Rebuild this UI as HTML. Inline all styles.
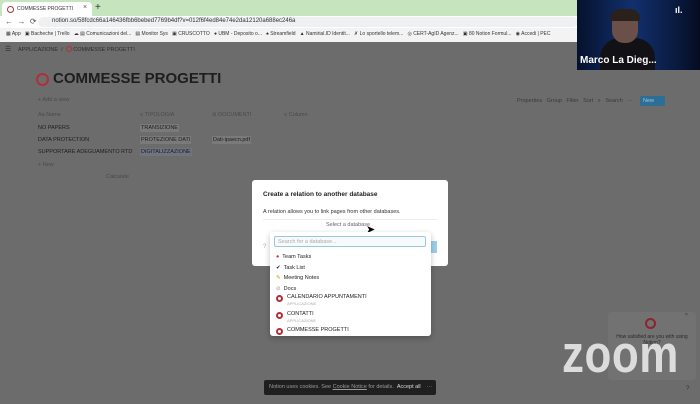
<!DOCTYPE html>
<html><head><meta charset="utf-8"><style>
*{margin:0;padding:0;box-sizing:border-box}
body{width:700px;height:404px;overflow:hidden;background:#6c6c6c;font-family:"Liberation Sans",sans-serif;position:relative}
.a{position:absolute;white-space:nowrap}
.ring{display:block;border:2px solid #b0303a;border-radius:50%}
.ri{display:inline-block;border:1.5px solid #b0303a;border-radius:50%}
</style></head><body>
<div class="a" style="left:0;top:0;width:700px;height:16px;background:#c6e5be"></div>
<div class="a" style="left:2px;top:2px;width:90px;height:15px;background:#fff;border-radius:4px 4px 0 0"></div>
<div class="a" style="left:7px;top:6px"><span class="ring" style="width:7px;height:7px;border-width:1.5px"></span></div>
<div class="a" style="left:17px;top:6px;font-size:5px;color:#333">COMMESSE PROGETTI</div>
<div class="a" style="left:83px;top:4px;font-size:7px;color:#555">×</div>
<div class="a" style="left:95px;top:2px;font-size:10px;color:#333">+</div>
<div class="a" style="left:0;top:16px;width:700px;height:12px;background:#fff"></div>
<div class="a" style="left:5px;top:17px;font-size:8px;color:#555">←&nbsp; →&nbsp; ⟳</div>
<div class="a" style="left:38px;top:17px;width:540px;height:10px;background:#eef0f1;border-radius:5px"></div>
<div class="a" style="left:52px;top:18px;font-size:6px;color:#333">notion.so/58fcdc66a146436fbb6bebed7769b4df?v=012f6f4ed84e74e2da12120a688ec246a</div>
<div class="a" style="left:0;top:28px;width:700px;height:14px;background:#f3f3f3"></div>
<div class="a" style="left:6px;top:31px;font-size:5px;color:#333;word-spacing:0">▦ App &nbsp; ▣ Bacheche | Trello &nbsp; ☁ ▤ Comunicazioni del... &nbsp; ▤ Monitor Sys &nbsp; ▣ CRUSCOTTO &nbsp; ● UBM - Deposito o... &nbsp; ♠ Streamfield &nbsp; ▲ Namirial.ID Identit... &nbsp; ✗ Lo sportello telem... &nbsp; ◎ CERT-AgID Agenz... &nbsp; ▣ 80 Notion Formul... &nbsp; ◉ Accedi | PEC</div>
<div class="a" style="left:577px;top:0;width:123px;height:70px;background:linear-gradient(90deg,#06112c,#12306e 45%,#0a1a40 80%,#050c20)"></div>
<div class="a" style="left:600px;top:38px;width:55px;height:32px;background:#121216;border-radius:20px 20px 0 0"></div>
<div class="a" style="left:612px;top:11px;width:26px;height:32px;background:#6a5048;border-radius:12px"></div>
<div class="a" style="left:610px;top:9px;width:30px;height:12px;background:#2a201c;border-radius:14px 14px 4px 4px"></div>
<div class="a" style="left:580px;top:55px;font-size:10px;font-weight:bold;color:#fff">Marco La Dieg...</div>
<div class="a" style="left:675px;top:5px;font-size:9px;font-weight:bold;color:#fff">ıl.</div>
<div class="a" style="left:5px;top:45px;font-size:7px;color:#2c2c2c">☰</div>
<div class="a" style="left:18px;top:46px;font-size:5.5px;color:#2e2e2e">APPLICAZIONE &nbsp;/ &nbsp;<span class="ri" style="width:6px;height:6px;vertical-align:-1px"></span> COMMESSE PROGETTI</div>
<div class="a" style="left:36px;top:73px"><span class="ring" style="width:13px;height:13px;border-width:2.5px"></span></div>
<div class="a" style="left:53px;top:70px;font-size:15px;font-weight:bold;color:#1e1e1e">COMMESSE PROGETTI</div>
<div class="a" style="left:38px;top:97px;font-size:5.5px;color:#4a4a4a">+ Add a view</div>
<div class="a" style="left:38px;top:112px;font-size:5.5px;color:#4a4a4a">Aa Name</div>
<div class="a" style="left:140px;top:112px;font-size:5.5px;color:#4a4a4a">≡ TIPOLOGIA</div>
<div class="a" style="left:212px;top:112px;font-size:5.5px;color:#4a4a4a">⊘ DOCUMENTI</div>
<div class="a" style="left:284px;top:112px;font-size:5.5px;color:#4a4a4a">≡ Column</div>
<div class="a" style="left:38px;top:125px;font-size:5.5px;color:#1e1e1e">NO PAPERS</div>
<div class="a" style="left:38px;top:137px;font-size:5.5px;color:#1e1e1e">DATA PROTECTION</div>
<div class="a" style="left:38px;top:149px;font-size:5.5px;color:#1e1e1e">SUPPORTARE ADEGUAMENTO RTD</div>
<div class="a" style="left:140px;top:124px;font-size:5.5px;color:#1e1e1e;background:#7a7a7a;padding:1px">TRANSIZIONE</div>
<div class="a" style="left:140px;top:136px;font-size:5.5px;color:#1e1e1e;background:#7a7a7a;padding:1px">PROTEZIONE DATI</div>
<div class="a" style="left:140px;top:148px;font-size:5.5px;color:#1e1e1e;background:#6f7480;padding:1px">DIGITALIZZAZIONE</div>
<div class="a" style="left:212px;top:136px;font-size:5.5px;color:#1e1e1e;background:#7a7a7a;padding:1px">Dati-ipaecn.pdf</div>
<div class="a" style="left:38px;top:162px;font-size:5.5px;color:#4a4a4a">+ New</div>
<div class="a" style="left:106px;top:174px;font-size:5.5px;color:#4a4a4a">Calculate</div>
<div class="a" style="left:517px;top:98px;font-size:5.5px;color:#3a3a3a;word-spacing:3px">Properties Group Filter Sort ⌕ Search ···</div>
<div class="a" style="left:640px;top:96px;width:25px;height:10px;background:#2c6e96;border-radius:2px;font-size:5.5px;color:#a8c6d8;padding:2px 3px">New</div>
<div class="a" style="left:252px;top:180px;width:196px;height:86px;background:#fff;border-radius:3px"></div>
<div class="a" style="left:263px;top:191px;font-size:6.5px;color:#222;font-weight:bold">Create a relation to another database</div>
<div class="a" style="left:263px;top:209px;font-size:5.5px;color:#333">A relation allows you to link pages from other databases.</div>
<div class="a" style="left:263px;top:219px;width:175px;border-top:1px solid #eee"></div>
<div class="a" style="left:326px;top:222px;font-size:5.5px;color:#666">Select a database</div>
<div class="a" style="left:263px;top:244px;font-size:6px;color:#aaa">?</div>
<div class="a" style="left:428px;top:241px;width:9px;height:12px;background:#9cd0ea"></div>
<div class="a" style="left:366px;top:223px;font-size:11px;color:#000">➤</div>
<div class="a" style="left:270px;top:232px;width:161px;height:104px;background:#fff;border-radius:3px;box-shadow:0 2px 6px rgba(0,0,0,.25);overflow:hidden">
<div class="a" style="left:4px;top:4px;width:152px;height:11px;border:1px solid #9ac8dd;border-radius:2px;background:#f7f9fa;font-size:5.5px;color:#aaa;padding:2px 3px">Search for a database...</div>
<div class="a" style="left:6px;top:20px;font-size:5.5px;color:#222;line-height:10.5px">
<div><span style="color:#c33">●</span>&nbsp; Team Tasks</div>
<div>✔&nbsp; Task List</div>
<div><span style="color:#c90">✎</span>&nbsp; Meeting Notes</div>
<div><span style="color:#999">⊘</span>&nbsp; Docs</div>
</div>
<div class="a" style="left:6px;top:63px"><span class="ring" style="width:7px;height:7px"></span></div>
<div class="a" style="left:17px;top:62px;font-size:5.5px;color:#222">CALENDARIO APPUNTAMENTI</div>
<div class="a" style="left:17px;top:69px;font-size:4px;color:#aaa">APPLICAZIONE</div>
<div class="a" style="left:6px;top:80px"><span class="ring" style="width:7px;height:7px"></span></div>
<div class="a" style="left:17px;top:79px;font-size:5.5px;color:#222">CONTATTI</div>
<div class="a" style="left:17px;top:86px;font-size:4px;color:#aaa">APPLICAZIONE</div>
<div class="a" style="left:6px;top:96px"><span class="ring" style="width:7px;height:7px"></span></div>
<div class="a" style="left:17px;top:95px;font-size:5.5px;color:#222">COMMESSE PROGETTI</div>
</div>
<div class="a" style="left:608px;top:312px;width:88px;height:68px;background:#727272;border-radius:3px"></div>
<div class="a" style="left:645px;top:318px"><span class="ring" style="width:11px;height:11px;border-width:2px;border-color:#8a2530"></span></div>
<div class="a" style="left:614px;top:334px;width:76px;text-align:center;font-size:5px;color:#2a2a2a;white-space:normal">How satisfied are you with using Notion?</div>
<div class="a" style="left:685px;top:312px;font-size:5px;color:#333">×</div>
<div class="a" style="left:562px;top:329px;font-size:44px;font-weight:bold;color:#dcdcdc;letter-spacing:0.5px;line-height:44px;transform:scaleY(1.2);transform-origin:top left">zoom</div>
<div class="a" style="left:686px;top:386px;font-size:6px;color:#333">?</div>
<div class="a" style="left:264px;top:380px;width:172px;height:15px;background:#1f1f1f;border-radius:2px"></div>
<div class="a" style="left:269px;top:384px;font-size:5.5px;color:#9a9a9a">Notion uses cookies. See <u>Cookie Notice</u> for details. &nbsp;<span style="color:#ddd">Accept all</span> &nbsp; &nbsp;···</div>
</body></html>
